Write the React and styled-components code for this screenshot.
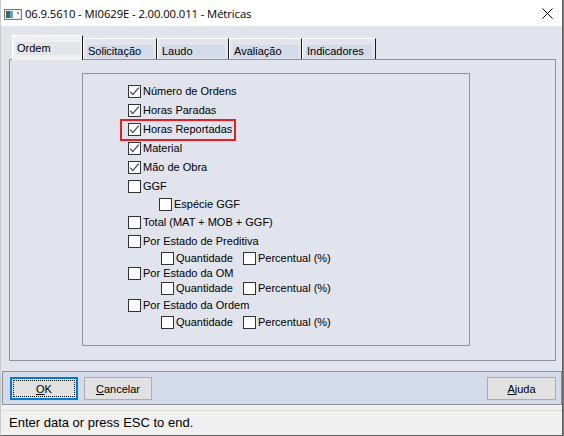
import styled, { createGlobalStyle } from 'styled-components';

const GlobalStyle = createGlobalStyle`
  html, body {
    margin: 0;
    padding: 0;
    background: #7a7a7a;
  }
  * {
    box-sizing: border-box;
  }
`;

const rows = [
  { label: 'Número de Ordens', checked: true, gap: 0 },
  { label: 'Horas Paradas', checked: true, gap: 6 },
  { label: 'Horas Reportadas', checked: true, gap: 6, marked: true },
  { label: 'Material', checked: true, gap: 6 },
  { label: 'Mão de Obra', checked: true, gap: 6 },
  { label: 'GGF', gap: 6 },
  { label: 'Espécie GGF', gap: 5, indent: 31 },
  { label: 'Total (MAT + MOB + GGF)', gap: 5 },
  { label: 'Por Estado de Preditiva', gap: 6 },
  { pair: true, gap: 4 },
  { label: 'Por Estado da OM', gap: 2 },
  { pair: true, gap: 2 },
  { label: 'Por Estado da Ordem', gap: 4 },
  { pair: true, gap: 4 },
];

const tabs = [
  { label: 'Ordem', width: 71, active: true },
  { label: 'Solicitação', width: 74 },
  { label: 'Laudo', width: 72 },
  { label: 'Avaliação', width: 73 },
  { label: 'Indicadores', width: 74 },
];

const WindowIcon = () => (
  <svg width="18" height="11" viewBox="0 0 18 11">
    <rect x="0.5" y="0.5" width="17" height="10" fill="#e8e8e8" stroke="#7a7a7a" />
    <rect x="2" y="2" width="4" height="7" fill="#2f6f6a" />
    <rect x="6" y="2" width="3" height="7" fill="#6aa0c8" />
    <rect x="9" y="2" width="7" height="7" fill="#fff" />
    <rect x="13" y="3" width="2" height="2" fill="#9a9a9a" />
  </svg>
);

const CloseGlyph = () => (
  <svg width="11" height="11" viewBox="0 0 11 11">
    <path d="M0.5 0.5 L10.5 10.5 M10.5 0.5 L0.5 10.5" stroke="#000" strokeWidth="1" />
  </svg>
);

const CheckBox = ({ checked, label, width }) => (
  <Item $width={width}>
    <Box>
      {checked && (
        <svg width="11" height="11" viewBox="0 0 11 11">
          <path d="M1.2 5.6 L3.8 8.6 L9.8 1.6" fill="none" stroke="#4a4a4a" strokeWidth="1.3" />
        </svg>
      )}
    </Box>
    <Label>{label}</Label>
  </Item>
);

export default function App() {
  return (
    <>
      <GlobalStyle />
      <Window>
        <TitleBar>
          <IconSlot>
            <WindowIcon />
          </IconSlot>
          <Title>06.9.5610 - MI0629E - 2.00.00.011 - Métricas</Title>
          <CloseSlot>
            <CloseGlyph />
          </CloseSlot>
        </TitleBar>

        <Client>
          <TabStrip>
            {tabs.map((t) => (
              <Tab key={t.label} $active={t.active} $width={t.width}>
                <TabLabel $active={t.active}>{t.label}</TabLabel>
              </Tab>
            ))}
          </TabStrip>

          <Panel>
            <Group>
              {rows.map((r, i) => (
                <Row key={i} $gap={r.gap} $indent={r.pair ? 33 : r.indent || 0}>
                  {r.pair ? (
                    <>
                      <CheckBox label="Quantidade" width={82} />
                      <CheckBox label="Percentual (%)" />
                    </>
                  ) : (
                    <CheckBox checked={r.checked} label={r.label} />
                  )}
                  {r.marked && <Highlight />}
                </Row>
              ))}
            </Group>
          </Panel>

          <ButtonBar>
            <Button $focused>
              <u>O</u>K
            </Button>
            <Button>
              <u>C</u>ancelar
            </Button>
            <Spacer />
            <Button $width={69}>
              <u>A</u>juda
            </Button>
          </ButtonBar>
        </Client>

        <StatusArea>
          <StatusText>Enter data or press ESC to end.</StatusText>
        </StatusArea>
      </Window>
    </>
  );
}

const Window = styled.div`
  width: 563px;
  height: 436px;
  display: flex;
  flex-direction: column;
  background: #e1e4ec;
  border-left: 1px solid #c9c9c9;
  border-right: 1px solid #5f5f5f;
  border-bottom: 1px solid #5f5f5f;
  font-family: 'Liberation Sans', Arial, sans-serif;
  color: #000;
`;

const TitleBar = styled.div`
  height: 26px;
  flex: none;
  display: flex;
  align-items: center;
  background: #fff;
`;

const IconSlot = styled.div`
  width: 24px;
  padding-left: 3px;
  display: flex;
  align-items: center;
  padding-top: 2px;
`;

const Title = styled.div`
  flex: 1;
  font-family: 'Segoe UI', 'Open Sans', sans-serif;
  font-size: 11.3px;
  letter-spacing: -0.1px;
  padding-top: 1px;
`;

const CloseSlot = styled.div`
  width: 20px;
  display: flex;
  padding-top: 1px;
`;

const Client = styled.div`
  flex: none;
  display: flex;
  flex-direction: column;
`;

const TabStrip = styled.div`
  height: 24px;
  margin: 9px 0 0 11px;
  display: flex;
  align-items: flex-end;
  position: relative;
  z-index: 1;
`;

const Tab = styled.div`
  width: ${(p) => p.$width}px;
  height: ${(p) => (p.$active ? 25 : 21)}px;
  margin-bottom: ${(p) => (p.$active ? -1 : 0)}px;
  align-self: ${(p) => (p.$active ? 'flex-start' : 'flex-end')};
  background: ${(p) => (p.$active ? '#f0f0f0' : '#e1e4ec')};
  border-top: 1px solid #fff;
  border-left: 1px solid #fff;
  border-right: 1px solid #1a1a1a;
  padding: ${(p) => (p.$active ? '6px 2px 0 3px' : '6px 3px 0 3px')};
`;

const TabLabel = styled.div`
  height: 13px;
  background: ${(p) => (p.$active ? '#e3e5eb' : '#d3dbeb')};
  font-size: 11px;
  line-height: 13px;
  padding-left: 1px;
  white-space: nowrap;
  overflow: hidden;
`;

const Panel = styled.div`
  width: 547px;
  height: 302px;
  margin-left: 8px;
  border: 1px solid #8c929e;
  padding: 13px 0 0 72px;
`;

const Group = styled.div`
  width: 388px;
  height: 273px;
  border: 1px solid #8c929e;
  padding: 11px 0 0 45px;
  display: flex;
  flex-direction: column;
`;

const Row = styled.div`
  position: relative;
  display: flex;
  align-items: center;
  height: 13px;
  margin-top: ${(p) => p.$gap}px;
  margin-left: ${(p) => p.$indent}px;
`;

const Item = styled.div`
  display: flex;
  align-items: center;
  height: 13px;
  width: ${(p) => (p.$width ? `${p.$width}px` : 'auto')};
`;

const Box = styled.div`
  width: 13px;
  height: 13px;
  flex: none;
  border: 1px solid #333;
  background: #fff;
  display: flex;
  align-items: center;
  justify-content: center;
`;

const Label = styled.span`
  margin-left: 2px;
  font-size: 11px;
  line-height: 13px;
  white-space: nowrap;
`;

const Highlight = styled.div`
  position: absolute;
  left: -8px;
  top: -4px;
  width: 116px;
  height: 22px;
  border: 2px solid #ec1c24;
  pointer-events: none;
`;

const ButtonBar = styled.div`
  width: 560px;
  height: 34px;
  margin: 10px 0 0 1px;
  background: #d3dbeb;
  border: 1px solid #8a93a2;
  display: flex;
  align-items: flex-start;
  gap: 6px;
  padding: 5px 5px 0 7px;
`;

const Spacer = styled.div`
  flex: 1;
`;

const Button = styled.div`
  width: ${(p) => p.$width || 68}px;
  height: 23px;
  display: flex;
  align-items: center;
  justify-content: center;
  background: #e1e1e1;
  border: ${(p) => (p.$focused ? '2px solid #0078d7' : '1px solid #adadad')};
  outline: ${(p) => (p.$focused ? '1px dotted #000' : 'none')};
  outline-offset: -4px;
  font-size: 11px;

  u {
    text-decoration-thickness: 1px;
    text-underline-offset: 1px;
  }
`;

const StatusArea = styled.div`
  flex: 1;
  background: #f0f0f0;
  padding-top: 5px;
  display: flex;
  flex-direction: column;
`;

const StatusText = styled.div`
  flex: 1;
  border-top: 1px solid #dadada;
  padding-left: 8px;
  font-size: 13px;
  line-height: 24px;
`;
